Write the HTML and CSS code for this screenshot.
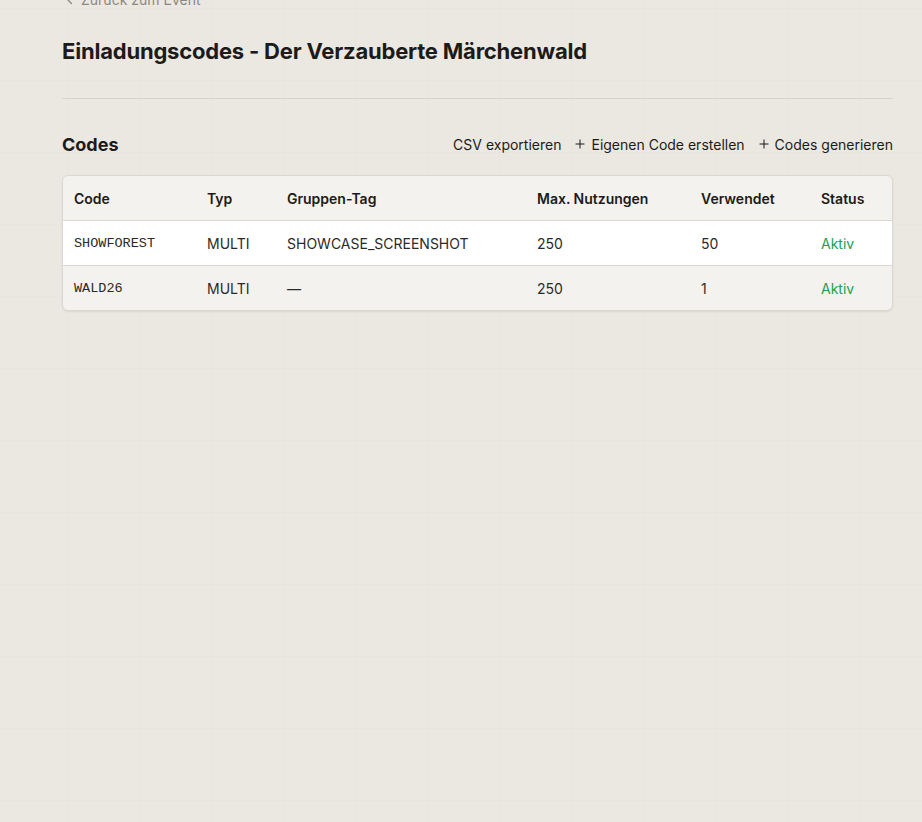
FILE: index.html
```html
<!DOCTYPE html>
<html lang="de">
<head>
    <meta charset="utf-8" />
    <title>Einladungscodes - Der Verzauberte Märchenwald</title>
    <link rel="stylesheet" href="styles.css">
</head>
<body>
    <main class="page">
        <a class="back-link" href="#">
            <svg class="chevron" viewBox="0 0 10 10" width="10" height="10">
                <path d="M6.5 1.5 3 5l3.5 3.5" />
            </svg>
            Zurück zum Event
        </a>

        <h1 class="page-title">Einladungscodes - Der Verzauberte Märchenwald</h1>

        <hr class="divider" />

        <section class="codes">
            <div class="codes-head">
                <h2>Codes</h2>
                <div class="actions">
                    <button class="action">CSV exportieren</button>
                    <button class="action">
                        <svg class="plus" viewBox="0 0 10 10" width="10" height="10">
                            <path d="M5 0.5v9M0.5 5h9" />
                        </svg>
                        Eigenen Code erstellen
                    </button>
                    <button class="action">
                        <svg class="plus" viewBox="0 0 10 10" width="10" height="10">
                            <path d="M5 0.5v9M0.5 5h9" />
                        </svg>
                        Codes generieren
                    </button>
                </div>
            </div>

            <div class="table-card">
                <table class="code-table">
                    <colgroup>
                        <col class="col-code" />
                        <col class="col-type" />
                        <col class="col-tag" />
                        <col class="col-max" />
                        <col class="col-used" />
                        <col />
                    </colgroup>
                    <thead>
                        <tr>
                            <th>Code</th>
                            <th>Typ</th>
                            <th>Gruppen-Tag</th>
                            <th>Max. Nutzungen</th>
                            <th>Verwendet</th>
                            <th>Status</th>
                        </tr>
                    </thead>
                    <tbody>
                        <tr>
                            <td class="mono">SHOWFOREST</td>
                            <td>MULTI</td>
                            <td>SHOWCASE_SCREENSHOT</td>
                            <td>250</td>
                            <td>50</td>
                            <td class="status-active">Aktiv</td>
                        </tr>
                        <tr>
                            <td class="mono">WALD26</td>
                            <td>MULTI</td>
                            <td>—</td>
                            <td>250</td>
                            <td>1</td>
                            <td class="status-active">Aktiv</td>
                        </tr>
                    </tbody>
                </table>
            </div>
        </section>
    </main>
</body>
</html>
```

FILE: styles.css
```css
html, body {
    margin: 0;
    height: 100%;
}
body {
    background-color: #ebe8e1;
    background-image:
        linear-gradient(to right, rgba(120, 110, 90, 0.028) 1px, transparent 1px),
        linear-gradient(to bottom, rgba(120, 110, 90, 0.028) 1px, transparent 1px);
    background-size: 72px 72px;
    background-position: 67px 8px;
    font-family: Inter, "Noto Sans", sans-serif;
    color: #1c1b19;
}
.page {
    padding: 0 29px 0 62px;
    margin-top: -11px;
}

/* back link, mostly scrolled out of view */
.back-link {
    display: inline-flex;
    align-items: center;
    gap: 6px;
    padding-left: 3px;
    font-size: 14px;
    line-height: 20px;
    color: #8c8880;
    text-decoration: none;
}
.chevron path {
    fill: none;
    stroke: currentColor;
    stroke-width: 1.3;
    stroke-linecap: round;
    stroke-linejoin: round;
}

.page-title {
    margin: 26px 0 0;
    font-size: 22px;
    line-height: 30px;
    font-weight: 700;
    letter-spacing: -0.2px;
}
.divider {
    border: 0;
    border-top: 1px solid #d8d4cc;
    margin: 32px 0 0;
}

.codes {
    margin-top: 33px;
}
.codes-head {
    display: flex;
    align-items: center;
    justify-content: space-between;
    height: 24px;
}
.codes-head h2 {
    margin: 0;
    font-size: 18px;
    font-weight: 700;
}
.actions {
    display: flex;
    gap: 14px;
}
.action {
    display: inline-flex;
    align-items: center;
    gap: 6px;
    padding: 0;
    border: 0;
    background: none;
    font: 14px Inter, "Noto Sans", sans-serif;
    color: #1c1b19;
    cursor: pointer;
}
.plus path {
    stroke: currentColor;
    stroke-width: 1;
}

.table-card {
    margin-top: 19px;
    border: 1px solid #dcd8d1;
    border-radius: 6px;
    overflow: hidden;
    background: #f4f2ee;
    box-shadow: 0 1px 2px rgba(0, 0, 0, 0.08);
}
.code-table {
    width: 100%;
    border-collapse: collapse;
    font-size: 14px;
}
.col-code { width: 133px; }
.col-type { width: 80px; }
.col-tag { width: 250px; }
.col-max { width: 164px; }
.col-used { width: 120px; }

.code-table th,
.code-table td {
    text-align: left;
    padding: 0 11px;
}
.code-table th {
    height: 44px;
    font-weight: 600;
    color: #1c1b19;
}
.code-table td {
    height: 44px;
    border-top: 1px solid #dcd8d1;
    color: #2b2a27;
}
.code-table tbody tr:nth-child(odd) {
    background: #ffffff;
}
.code-table .mono {
    font-family: "Liberation Mono", "DejaVu Sans Mono", monospace;
    font-size: 13.5px;
}
.status-active {
    color: #23a04c !important;
}
```
